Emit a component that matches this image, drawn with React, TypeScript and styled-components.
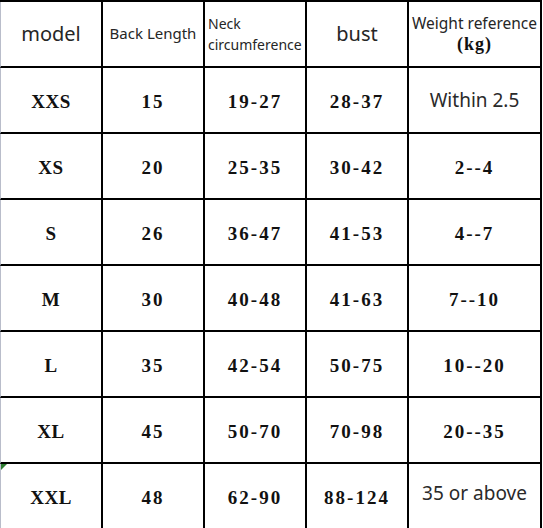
import React from "react";
import styled, { createGlobalStyle, css } from "styled-components";

const GlobalStyle = createGlobalStyle`
  html, body {
    margin: 0;
    padding: 0;
    background: #ffffff;
    overflow: hidden;
  }
`;

const Page = styled.div`
  width: 543px;
  height: 528px;
  overflow: hidden;
  background: #ffffff;
`;

const Table = styled.div`
  width: 542px;
  display: flex;
  flex-direction: column;
  border-top: 2px solid #000;
`;

const Row = styled.div<{ $last?: boolean }>`
  display: grid;
  grid-template-columns: 103px 102px 102px 102px 133px;
  height: ${(p) => (p.$last ? "64px" : "66px")};
`;

const Cell = styled.div<{ $last?: boolean; $first?: boolean }>`
  position: relative;
  box-sizing: border-box;
  display: flex;
  flex-direction: column;
  align-items: center;
  justify-content: center;
  border-right: 2px solid #000;
  border-bottom: ${(p) => (p.$last ? "none" : "2px solid #000")};
  ${(p) =>
    p.$first &&
    css`
      border-left: 1px solid #b9bdca;
    `}
`;

const HeadText = styled.span<{ $size: number }>`
  font-family: "Noto Sans", "Open Sans", sans-serif;
  font-size: ${(p) => p.$size}px;
  color: #262626;
  white-space: nowrap;
  line-height: 1.3;
`;

const NeckText = styled.span`
  align-self: stretch;
  padding-left: 3px;
  font-family: "Noto Sans", "Open Sans", sans-serif;
  font-size: 14px;
  line-height: 21px;
  color: #262626;
  white-space: nowrap;
`;

const Unit = styled.span`
  font-family: "Liberation Serif", "DejaVu Serif", serif;
  font-weight: 700;
  font-size: 18px;
  line-height: 22px;
  color: #111;
  letter-spacing: 1px;
`;

const Value = styled.span<{ $spaced?: boolean }>`
  padding-top: 4px;
  font-family: "Liberation Serif", "DejaVu Serif", serif;
  font-weight: 700;
  font-size: 19px;
  color: #111;
  letter-spacing: ${(p) => (p.$spaced ? "2px" : "0.5px")};
  white-space: nowrap;
`;

const Note = styled.span<{ $raised?: boolean }>`
  font-family: "Noto Sans", "Open Sans", sans-serif;
  font-size: 19px;
  color: #2a2a2a;
  white-space: nowrap;
  ${(p) =>
    p.$raised &&
    css`
      margin-bottom: 6px;
    `}
`;

const CommentMark = styled.span`
  position: absolute;
  top: 0;
  left: 0;
  width: 0;
  height: 0;
  border-top: 6px solid #2f7d32;
  border-right: 6px solid transparent;
`;

type SizeRow = {
  model: string;
  back: string;
  neck: string;
  bust: string;
  weight: string;
  note?: boolean;
};

const rows: SizeRow[] = [
  { model: "XXS", back: "15", neck: "19-27", bust: "28-37", weight: "Within 2.5", note: true },
  { model: "XS", back: "20", neck: "25-35", bust: "30-42", weight: "2--4" },
  { model: "S", back: "26", neck: "36-47", bust: "41-53", weight: "4--7" },
  { model: "M", back: "30", neck: "40-48", bust: "41-63", weight: "7--10" },
  { model: "L", back: "35", neck: "42-54", bust: "50-75", weight: "10--20" },
  { model: "XL", back: "45", neck: "50-70", bust: "70-98", weight: "20--35" },
  { model: "XXL", back: "48", neck: "62-90", bust: "88-124", weight: "35 or above", note: true },
];

export default function App() {
  return (
    <Page>
      <GlobalStyle />
      <Table>
        <Row>
          <Cell $first>
            <HeadText $size={20}>model</HeadText>
          </Cell>
          <Cell>
            <HeadText $size={15}>Back Length</HeadText>
          </Cell>
          <Cell>
            <NeckText>
              Neck
              <br />
              circumference
            </NeckText>
          </Cell>
          <Cell>
            <HeadText $size={20}>bust</HeadText>
          </Cell>
          <Cell>
            <HeadText $size={15.5}>Weight reference</HeadText>
            <Unit>(kg)</Unit>
          </Cell>
        </Row>
        {rows.map((r, i) => {
          const last = i === rows.length - 1;
          return (
            <Row key={r.model} $last={last}>
              <Cell $first $last={last}>
                {last && <CommentMark />}
                <Value>{r.model}</Value>
              </Cell>
              <Cell $last={last}>
                <Value $spaced>{r.back}</Value>
              </Cell>
              <Cell $last={last}>
                <Value $spaced>{r.neck}</Value>
              </Cell>
              <Cell $last={last}>
                <Value $spaced>{r.bust}</Value>
              </Cell>
              <Cell $last={last}>
                {r.note ? (
                  <Note $raised={last}>{r.weight}</Note>
                ) : (
                  <Value $spaced>{r.weight}</Value>
                )}
              </Cell>
            </Row>
          );
        })}
      </Table>
    </Page>
  );
}
